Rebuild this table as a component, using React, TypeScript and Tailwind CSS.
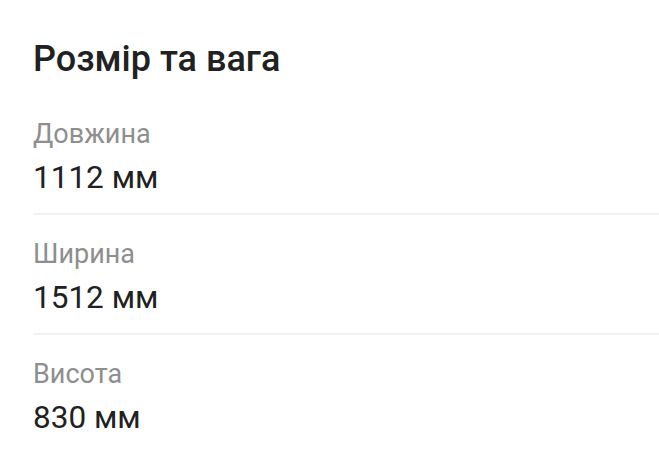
import React from "react";

const specs = [
  { label: "Довжина", value: "1112 мм" },
  { label: "Ширина", value: "1512 мм" },
  { label: "Висота", value: "830 мм" },
];

export default function App() {
  return (
    <div
      className="min-h-screen w-full bg-white text-[#212121]"
      style={{ fontFamily: "Roboto, 'Noto Sans', sans-serif" }}
    >
      <div className="pl-[33px] pt-[38px]">
        <h2 className="text-[36px] leading-[42px] font-medium">Розмір та вага</h2>
        <div className="mt-[38px] flex flex-col">
          {specs.map((s, idx) => (
            <div key={idx}>
              <div className="text-[27px] leading-[32px] text-[#8e8e8e]">{s.label}</div>
              <div className="mt-[10px] text-[31.5px] leading-[36px]">{s.value}</div>
              {idx < specs.length - 1 && (
                <div className="mt-[17px] mb-[23px] h-[2px] bg-[#f2f2f2]" />
              )}
            </div>
          ))}
        </div>
      </div>
    </div>
  );
}
